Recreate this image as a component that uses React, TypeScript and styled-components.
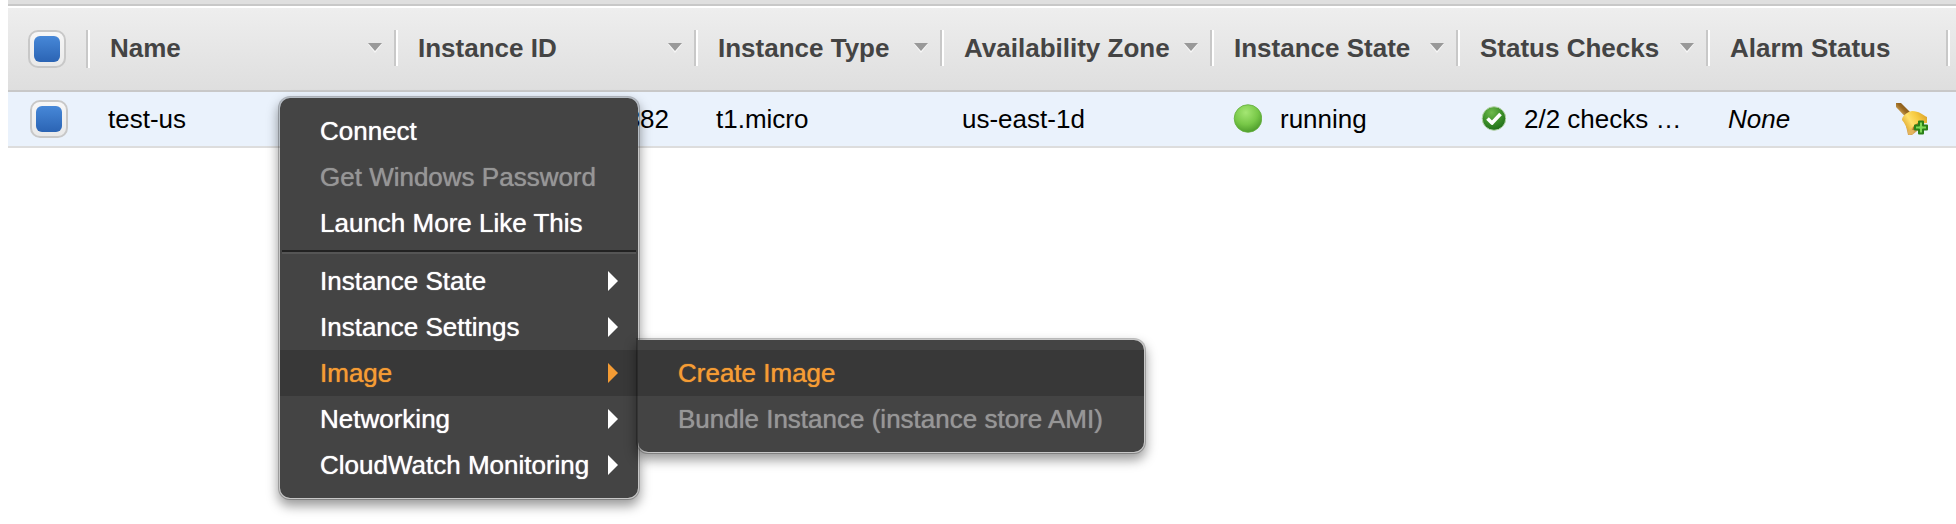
import React from "react";
import styled, { createGlobalStyle, css } from "styled-components";

const GlobalStyle = createGlobalStyle`
  *, *::before, *::after { box-sizing: border-box; }
  body {
    margin: 0;
    background: #fff;
    color: #000;
    font: 26px/30px "Liberation Sans", Arial, sans-serif;
  }
`;

const Page = styled.main`
  position: relative;
  min-height: 100vh;
  padding-left: 8px;
  overflow: hidden;
`;

const PanelEdge = styled.div`
  height: 6px;
  background: #dfdfdf;
  border-bottom: 2px solid #c8c8c8;
`;

const Table = styled.table`
  width: 100%;
  margin-top: 2px;
  table-layout: fixed;
  border-collapse: separate;
  border-spacing: 0;
`;

const Column = styled.col<{ $width?: number }>`
  ${(p) => p.$width && css`width: ${p.$width}px;`}
`;

const HeadRow = styled.tr`
  background: linear-gradient(#eeeeee, #dedede);
`;

const HeadCell = styled.th`
  height: 84px;
  padding: 22px 0 0;
  border-bottom: 2px solid #c8c8c8;
  color: #444;
  font-weight: bold;
  text-align: left;
  vertical-align: top;
  white-space: nowrap;
`;

const HeadInner = styled.div<{ $tall?: boolean }>`
  display: flex;
  align-items: center;
  justify-content: space-between;
  height: ${(p) => (p.$tall ? 38 : 36)}px;
  padding: 0 14px 0 20px;
  border-right: 2px solid #fff;
  box-shadow: inset -2px 0 #c8c8c8;
`;

const SortArrow = styled.svg`
  display: block;
  width: 14px;
  height: 12px;
`;

const BodyRow = styled.tr`
  background: #eaf2fc;
`;

const BodyCell = styled.td<{ $indent?: number; $italic?: boolean }>`
  height: 56px;
  padding: 0 0 0 ${(p) => p.$indent ?? 18}px;
  border-bottom: 2px solid #dddddd;
  font-style: ${(p) => (p.$italic ? "italic" : "normal")};
  white-space: nowrap;
`;

const CellInner = styled.div<{ $gap?: number; $spread?: boolean }>`
  display: flex;
  align-items: center;
  gap: ${(p) => p.$gap ?? 0}px;
  justify-content: ${(p) => (p.$spread ? "space-between" : "flex-start")};
  padding-right: ${(p) => (p.$spread ? 22 : 0)}px;
`;

const Tick = styled.input`
  appearance: none;
  display: block;
  flex: none;
  width: 38px;
  height: 38px;
  margin: 0;
  padding: 4px;
  border: 2px solid #c8c8c8;
  border-radius: 10px;
  background: linear-gradient(#f7f7f7, #e9e9e9);

  &:checked::before {
    content: "";
    display: block;
    width: 26px;
    height: 26px;
    border-radius: 6px;
    background: linear-gradient(#4788d8, #2b64b4);
  }
`;

const IconButton = styled.button`
  display: block;
  padding: 0;
  border: 0;
  background: none;
`;

const Icon = styled.svg<{ $size: number }>`
  display: block;
  flex: none;
  width: ${(p) => p.$size}px;
  height: ${(p) => p.$size}px;
`;

const Menu = styled.ul`
  position: absolute;
  margin: 0;
  padding: 10px 0;
  list-style: none;
  border: 2px solid rgba(0, 0, 0, 0.22);
  border-radius: 12px;
  background: #444 padding-box;
  box-shadow: 0 6px 12px rgba(0, 0, 0, 0.4);
`;

const ContextMenu = styled(Menu)`
  top: 96px;
  left: 278px;
  width: 362px;
`;

const SubMenu = styled(Menu)`
  top: -12px;
  left: calc(100% - 2px);
  width: 510px;
  border-top-left-radius: 0;
`;

const MenuItem = styled.li`
  position: relative;
`;

const MenuButton = styled.button<{ $active?: boolean }>`
  display: flex;
  align-items: center;
  justify-content: space-between;
  width: 100%;
  height: 46px;
  padding: 0 20px 0 40px;
  border: 0;
  background: ${(p) => (p.$active ? "#383838" : "transparent")};
  color: ${(p) => (p.$active ? "#f59c34" : "#fff")};
  font: inherit;
  text-align: left;
  text-shadow: 0 0 1px currentColor;
  white-space: nowrap;

  &:disabled { color: #969696; }
`;

const Divider = styled.li`
  height: 4px;
  margin: 4px 2px;
  border-top: 2px solid #222;
  border-bottom: 2px solid #555;
`;

const MenuArrow = styled.svg`
  display: block;
  flex: none;
  width: 10px;
  height: 20px;
  fill: currentColor;
`;

const Sort = () => (
  <SortArrow viewBox="0 0 14 12" aria-hidden="true">
    <path d="M0 2h14l-7 9z" fill="#fff" fillOpacity=".7" />
    <path d="M0 1h14l-7 8z" fill="#999" />
  </SortArrow>
);

const RunningIcon = () => (
  <Icon $size={30} viewBox="0 0 30 30" aria-hidden="true">
    <defs>
      <radialGradient id="run" cx=".42" cy=".28" r=".72">
        <stop offset="0" stopColor="#a4e673" />
        <stop offset=".6" stopColor="#78c848" />
        <stop offset="1" stopColor="#4f9e2c" />
      </radialGradient>
    </defs>
    <circle cx="16" cy="14.500" r="13.800" fill="url(#run)" stroke="#62ad3b" strokeWidth=".8" />
  </Icon>
);

const CheckIcon = () => (
  <Icon $size={26} viewBox="0 0 26 26" aria-hidden="true">
    <defs>
      <radialGradient id="ok" cx=".4" cy=".25" r=".8">
        <stop offset="0" stopColor="#6fba4c" />
        <stop offset=".5" stopColor="#3f922b" />
        <stop offset="1" stopColor="#1d6a17" />
      </radialGradient>
    </defs>
    <circle cx="14" cy="12.500" r="11.800" fill="url(#ok)" stroke="#b5d3a8" strokeWidth="1" />
    <path d="M7.500 12.500l4.500 4.600 8.500-9" fill="none" stroke="#fff" strokeWidth="3.600" strokeLinejoin="round" />
  </Icon>
);

const AlarmIcon = () => (
  <Icon $size={32} viewBox="0 0 32 32" aria-hidden="true">
    <defs>
      <linearGradient id="grip" x1="0" y1="1" x2="1" y2="0">
        <stop offset=".2" stopColor="#dfb463" />
        <stop offset=".55" stopColor="#97661f" />
        <stop offset="1" stopColor="#7d5520" />
      </linearGradient>
      <linearGradient id="bell" x1="0" y1=".7" x2="1" y2=".2">
        <stop offset="0" stopColor="#dda42c" />
        <stop offset=".35" stopColor="#ffe06a" />
        <stop offset=".65" stopColor="#f6ca40" />
        <stop offset="1" stopColor="#d9a02a" />
      </linearGradient>
    </defs>
    <path d="M0 0h5l9 9-4.500 5L0 4z" fill="url(#grip)" />
    <path d="M16 32c3-2 6-5 9-7l-6-6-9 4 2 9z" fill="#d3a052" />
    <path d="M10 23c2 2 1 6 3 9l4-1 3-9z" fill="#e3b45c" />
    <path d="M6 17c0-4 5-8 10-9 7 0 11 4 15 6v6l-11 1c-3 2-5 5-7 7C10 25 9 20 6 17z" fill="url(#bell)" />
    <path d="M17 27c1-4 5-7 10-8" fill="none" stroke="#a5701f" strokeWidth="1.500" />
    <path
      d="M23 18.500h4v4h4v4h-4v4h-4v-4h-4v-4h4z"
      fill="#7ed957"
      stroke="#2a8018"
      strokeWidth="2"
      strokeLinejoin="round"
    />
  </Icon>
);

const columns = [
  { label: "Name", width: 308, sortable: true },
  { label: "Instance ID", width: 300, sortable: true },
  { label: "Instance Type", width: 246, sortable: true },
  { label: "Availability Zone", width: 270, sortable: true },
  { label: "Instance State", width: 246, sortable: true },
  { label: "Status Checks", width: 250, sortable: true },
  { label: "Alarm Status", width: undefined, sortable: false },
];

type Entry = {
  label: string;
  disabled?: boolean;
  active?: boolean;
  children?: Entry[];
  hasMenu?: boolean;
};

const launchEntries: Entry[] = [
  { label: "Connect" },
  { label: "Get Windows Password", disabled: true },
  { label: "Launch More Like This" },
];

const manageEntries: Entry[] = [
  { label: "Instance State", hasMenu: true },
  { label: "Instance Settings", hasMenu: true },
  {
    label: "Image",
    hasMenu: true,
    active: true,
    children: [
      { label: "Create Image", active: true },
      { label: "Bundle Instance (instance store AMI)", disabled: true },
    ],
  },
  { label: "Networking", hasMenu: true },
  { label: "CloudWatch Monitoring", hasMenu: true },
];

const MenuEntries = ({ entries }: { entries: Entry[] }) => (
  <>
    {entries.map((e) => (
      <MenuItem key={e.label} role="none">
        <MenuButton
          type="button"
          role="menuitem"
          $active={e.active}
          disabled={e.disabled}
          aria-haspopup={e.hasMenu ? "menu" : undefined}
        >
          {e.label}
          {e.hasMenu && (
            <MenuArrow viewBox="0 0 10 20" aria-hidden="true">
              <path d="M0 0l10 10L0 20z" />
            </MenuArrow>
          )}
        </MenuButton>
        {e.children && (
          <SubMenu role="menu" aria-label={e.label}>
            <MenuEntries entries={e.children} />
          </SubMenu>
        )}
      </MenuItem>
    ))}
  </>
);

export default function App() {
  return (
    <>
      <GlobalStyle />
      <Page>
        <PanelEdge />
        <Table>
          <colgroup>
            <Column $width={82} />
            {columns.map((c) => (
              <Column key={c.label} $width={c.width} />
            ))}
            <Column $width={6} />
          </colgroup>
          <thead>
            <HeadRow>
              <HeadCell>
                <HeadInner $tall>
                  <Tick type="checkbox" defaultChecked aria-label="Select all instances" />
                </HeadInner>
              </HeadCell>
              {columns.map((c) => (
                <HeadCell key={c.label} scope="col">
                  <HeadInner>
                    {c.label}
                    {c.sortable && <Sort />}
                  </HeadInner>
                </HeadCell>
              ))}
              <HeadCell as="td" />
            </HeadRow>
          </thead>
          <tbody>
            <BodyRow>
              <BodyCell $indent={22}>
                <Tick type="checkbox" defaultChecked aria-label="Select test-us" />
              </BodyCell>
              <BodyCell>test-us</BodyCell>
              <BodyCell>i-0f4b7d21a9e658382</BodyCell>
              <BodyCell>t1.micro</BodyCell>
              <BodyCell>us-east-1d</BodyCell>
              <BodyCell>
                <CellInner $gap={18}>
                  <RunningIcon />
                  running
                </CellInner>
              </BodyCell>
              <BodyCell $indent={20}>
                <CellInner $gap={18}>
                  <CheckIcon />
                  2/2 checks …
                </CellInner>
              </BodyCell>
              <BodyCell $italic>
                <CellInner $spread>
                  None
                  <IconButton type="button" aria-label="Create alarm">
                    <AlarmIcon />
                  </IconButton>
                </CellInner>
              </BodyCell>
              <BodyCell />
            </BodyRow>
          </tbody>
        </Table>
        <ContextMenu role="menu" aria-label="Instance actions">
          <MenuEntries entries={launchEntries} />
          <Divider role="separator" />
          <MenuEntries entries={manageEntries} />
        </ContextMenu>
      </Page>
    </>
  );
}
